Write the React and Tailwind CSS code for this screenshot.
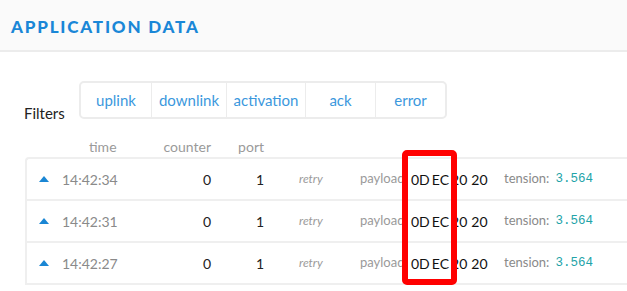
import React from "react";

const rows = ["14:42:34", "14:42:31", "14:42:27"];
const filters = [
  { label: "uplink", w: "w-[70px]" },
  { label: "downlink", w: "w-[75px]" },
  { label: "activation", w: "w-[79px]" },
  { label: "ack", w: "w-[70px]" },
  { label: "error", w: "w-[70px]" },
];

function Row({ time }) {
  return (
    <div className="flex h-[42px] items-center border-b-2 border-[#efefef] pl-[12px] whitespace-nowrap">
      <svg width="10" height="6" viewBox="0 0 10 6" className="mr-[13px] shrink-0">
        <polygon points="5,0 10,6 0,6" fill="#1a86d4" />
      </svg>
      <div className="w-[100px] shrink-0 text-[14px] text-[#8a8a8a]">{time}</div>
      <div className="w-[49px] shrink-0 text-right text-[14px] text-[#222]">0</div>
      <div className="w-[53px] shrink-0 text-right text-[14px] text-[#222]">1</div>
      <div className="ml-[35px] w-[61px] shrink-0 text-[12px] italic text-[#9a9a9a]">retry</div>
      <div className="w-[51px] shrink-0 text-[13px] text-[#9a9a9a]">payload</div>
      <div className="flex w-[93px] shrink-0 text-[14px] text-[#111]">
        <span className="mr-[2px]">0D</span>
        <span className="mr-[2px]">EC</span>
        <span className="mr-[4px]">20</span>
        <span>20</span>
      </div>
      <div className="shrink-0 text-[13px] text-[#8a8a8a]">tension:</div>
      <div className="ml-[6px] shrink-0 font-['Liberation_Mono',monospace] text-[12.5px] text-[#22a3a8]">
        3.564
      </div>
    </div>
  );
}

export default function App() {
  return (
    <div className="relative h-[291px] w-[627px] overflow-hidden bg-white font-['Lato','Noto_Sans',sans-serif]">
      <div className="flex h-[52px] items-center border-b-2 border-[#ececec] bg-[#fafafa] pl-[11px]">
        <h1 className="mt-[3px] text-[17px] font-black tracking-[1.8px] text-[#1a87d7]">
          APPLICATION DATA
        </h1>
      </div>

      <div className="mt-[29px] flex items-end pl-[24px]">
        <div className="mb-[-5px] w-[55px] text-[15px] text-[#222]">Filters</div>
        <div className="flex h-[38px] overflow-hidden rounded-[5px] border-2 border-[#ececec]">
          {filters.map((f, i) => (
            <div
              key={f.label}
              className={`flex items-center justify-center text-[15px] text-[#3b98dd] ${f.w} ${
                i > 0 ? "border-l border-[#ececec]" : ""
              }`}
            >
              {f.label}
            </div>
          ))}
        </div>
      </div>

      <div className="mt-[19px] flex h-[17px] items-center whitespace-nowrap text-[14px] text-[#9a9a9a]">
        <div className="w-[162px] shrink-0 pl-[89px]">time</div>
        <div className="w-[49px] shrink-0 text-right">counter</div>
        <div className="w-[53px] shrink-0 text-right">port</div>
      </div>

      <div className="ml-[25px] mt-[2px] w-[640px] rounded-tl-[4px] border-l-2 border-t-2 border-[#efefef]">
        {rows.map((t) => (
          <Row key={t} time={t} />
        ))}
      </div>

      <div className="absolute left-[402px] top-[150px] h-[135px] w-[55px] rounded-[5px] border-[6px] border-[#ff0000]" />
    </div>
  );
}
